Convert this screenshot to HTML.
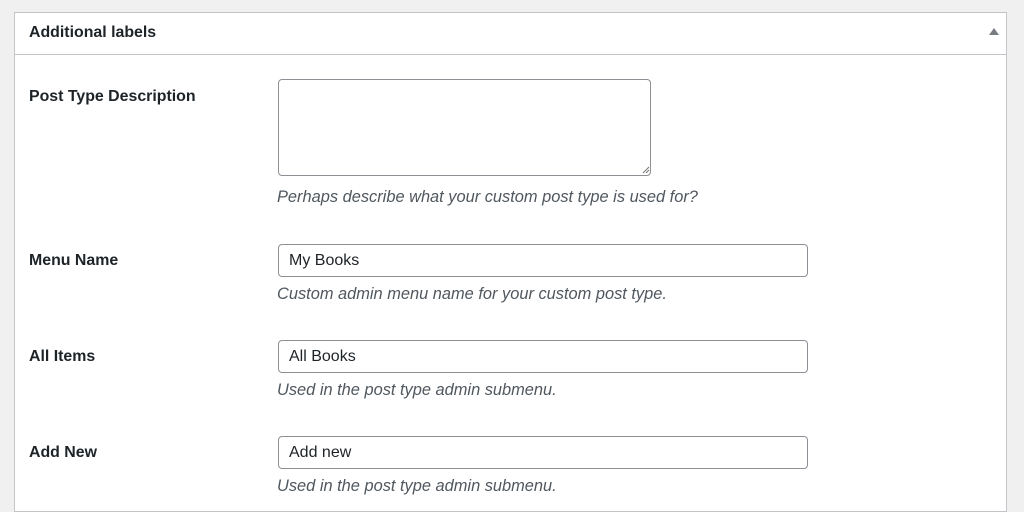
<!DOCTYPE html>
<html><head><style>
body{margin:0;width:1024px;height:501px;background:#f0f0f1;font-family:"Liberation Sans",sans-serif;overflow:hidden;position:relative;color:#1d2327}
.panel{position:absolute;left:14px;top:12px;width:993px;height:500px;background:#fff;border:1px solid #c3c4c7;box-sizing:border-box}
.hdr{position:absolute;left:0;top:0;right:0;height:41px;border-bottom:1px solid #c3c4c7}
.t{position:absolute;font-size:15.9px;font-weight:bold;line-height:20px}
.d{position:absolute;left:277px;font-size:16.4px;font-style:italic;color:#50575e;line-height:20px}
.in{position:absolute;left:278px;width:530px;height:33px;border:1px solid #8c8f94;border-radius:4px;box-sizing:border-box;font-size:16px;line-height:31px;padding-left:10px;background:#fff}
</style></head><body>
<div class="panel"><div class="hdr"></div></div>
<div class="t" style="left:29px;top:23px">Additional labels</div>
<div style="position:absolute;left:989px;top:28px;width:0;height:0;border-left:5px solid transparent;border-right:5px solid transparent;border-bottom:7px solid #787c82"></div>
<div class="t" style="left:29px;top:87px">Post Type Description</div>
<div style="position:absolute;left:278px;top:79px;width:373px;height:97px;border:1px solid #8c8f94;border-radius:4px;box-sizing:border-box"></div>
<svg style="position:absolute;left:642px;top:166px" width="8" height="8"><path d="M1 7L7 1M4 7L7 4" stroke="#777" stroke-width="1"/></svg>
<div class="d" style="top:187px">Perhaps describe what your custom post type is used for?</div>
<div class="t" style="left:29px;top:251px">Menu Name</div>
<div class="in" style="top:244px">My Books</div>
<div class="d" style="top:284px">Custom admin menu name for your custom post type.</div>
<div class="t" style="left:29px;top:347px">All Items</div>
<div class="in" style="top:340px">All Books</div>
<div class="d" style="top:380px">Used in the post type admin submenu.</div>
<div class="t" style="left:29px;top:443px">Add New</div>
<div class="in" style="top:436px">Add new</div>
<div class="d" style="top:476px">Used in the post type admin submenu.</div>
</body></html>
